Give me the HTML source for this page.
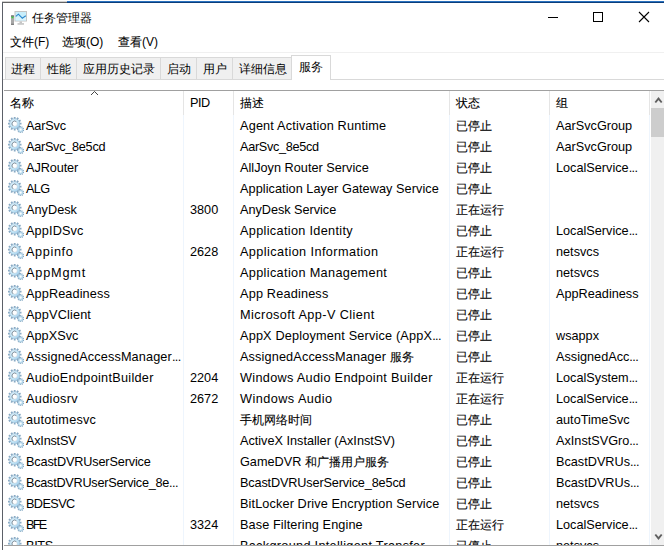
<!DOCTYPE html>
<html><head><meta charset="utf-8">
<style>
*{margin:0;padding:0;box-sizing:border-box}
html,body{width:664px;height:550px;overflow:hidden;background:#fff}
body{position:relative;font-family:"Liberation Sans",sans-serif;color:#000;font-size:12.7px}
.abs{position:absolute}
.c{font-size:12px;-webkit-text-stroke:0.1px #000}
.el{letter-spacing:-0.6px}
.bl{position:absolute;left:2px;top:2px;width:1px;height:548px;background:#5c6068}
.bt1{position:absolute;left:2px;top:1px;width:65px;height:1px;background:#d0d0d0}
.bt2{position:absolute;left:2px;top:2px;width:65px;height:1px;background:#646464}
.bt3{position:absolute;left:67px;top:1px;width:597px;height:1px;background:#2a72c0}
.bt4{position:absolute;left:67px;top:2px;width:597px;height:1px;background:#0b3d7a}
.title{position:absolute;left:32px;top:10px;line-height:17px;font-size:12px}
.menu{position:absolute;top:34px;line-height:17px;font-size:12px;white-space:nowrap}
.hl{position:absolute;height:1px}
.tab{position:absolute;top:57px;height:23px;background:#f0f0f0;border:1px solid #d9d9d9;border-bottom:none}
.tab span{position:absolute;top:4px;line-height:14px;font-size:12px;white-space:nowrap}
.tab.sel{top:55px;height:25px;background:#fff;z-index:2}
.hdr{position:absolute;top:92px;line-height:23px;white-space:nowrap}
.vd{position:absolute;width:1px}
.r{position:absolute;left:4px;width:646px;height:21px}
.r .g{position:absolute;left:4px;top:2px}
.t{position:absolute;top:1px;line-height:21px;white-space:nowrap}
.n{left:22px} .p{left:186px} .d{left:236px} .s{left:452px} .gr{left:552px}
</style></head><body>
<svg width="0" height="0" style="position:absolute">
<defs>
<linearGradient id="gg" x1="0" y1="0" x2="1" y2="1">
<stop offset="0" stop-color="#e2f3fc"/><stop offset="0.6" stop-color="#bfe4f7"/><stop offset="1" stop-color="#9cc8e8"/>
</linearGradient>
<symbol id="gear" viewBox="0 0 16 16">
<path d="M11.20,7.60 L13.50,7.60 L13.50,5.80 L11.20,5.80ZM10.15,9.73 L12.14,10.88 L13.04,9.32 L11.05,8.17ZM8.17,11.05 L9.32,13.04 L10.88,12.14 L9.73,10.15ZM5.80,11.20 L5.80,13.50 L7.60,13.50 L7.60,11.20ZM3.67,10.15 L2.52,12.14 L4.08,13.04 L5.23,11.05ZM2.35,8.17 L0.36,9.32 L1.26,10.88 L3.25,9.73ZM2.20,5.80 L-0.10,5.80 L-0.10,7.60 L2.20,7.60ZM3.25,3.67 L1.26,2.52 L0.36,4.08 L2.35,5.23ZM5.23,2.35 L4.08,0.36 L2.52,1.26 L3.67,3.25ZM7.60,2.20 L7.60,-0.10 L5.80,-0.10 L5.80,2.20ZM9.73,3.25 L10.88,1.26 L9.32,0.36 L8.17,2.35ZM11.05,5.23 L13.04,4.08 L12.14,2.52 L10.15,3.67Z" fill="#88a9c3"/>
<circle cx="6.7" cy="6.7" r="5.0" fill="url(#gg)" stroke="#94b5cd" stroke-width="0.5"/>
<circle cx="6.7" cy="6.7" r="2.6" fill="#fdfeff" stroke="#a9bccb" stroke-width="0.4"/>
<path d="M8.3,4.6 A2.6,2.6 0 0 0 5.0,8.8" fill="none" stroke="#6a7480" stroke-width="0.7"/>
<path d="M14.35,13.72 L15.88,14.19 L16.20,13.14 L14.67,12.67ZM13.22,14.58 L14.09,15.92 L15.01,15.33 L14.15,13.98ZM11.80,14.52 L11.60,16.10 L12.70,16.24 L12.90,14.65ZM10.76,13.56 L9.59,14.64 L10.33,15.45 L11.51,14.36ZM10.58,12.15 L8.98,12.23 L9.03,13.33 L10.63,13.25ZM11.34,10.95 L10.06,9.99 L9.40,10.86 L10.67,11.83ZM12.69,10.53 L12.34,8.97 L11.27,9.21 L11.62,10.77ZM14.00,11.07 L14.73,9.65 L13.76,9.15 L13.02,10.57ZM14.66,12.33 L16.13,11.71 L15.71,10.70 L14.23,11.32Z" fill="#86a9c4"/>
<circle cx="12.6" cy="12.6" r="2.5" fill="#bfe0f2" stroke="#8fb2cc" stroke-width="0.4"/>
<circle cx="12.6" cy="12.6" r="1.1" fill="#fff"/>
</symbol>
</defs></svg>

<div class="bt1"></div><div class="bt2"></div><div class="bt3"></div><div class="bt4"></div>
<div class="bl"></div>

<!-- title icon -->
<svg class="abs" style="left:0;top:0" width="30" height="30" viewBox="0 0 30 30">
<rect x="11" y="15.5" width="3" height="9" rx="0.8" fill="#a8a8a8"/>
<rect x="11" y="15.5" width="3" height="1" fill="#505058"/>
<rect x="11.5" y="16.6" width="2" height="1.6" fill="#3cd23c"/>
<rect x="11" y="23.8" width="3" height="1" fill="#6c6c6c"/>
<rect x="14.5" y="11" width="12.5" height="10.5" fill="#c4c4c4"/>
<rect x="15.5" y="12" width="10.5" height="8.5" fill="#c8eefb"/>
<rect x="15.5" y="17" width="10.5" height="3.5" fill="#d8f4fd"/>
<polyline points="15.8,16.4 18.4,14.2 22.3,18.2 25.8,15.8" fill="none" stroke="#2d88cc" stroke-width="1.1"/>
<rect x="19.5" y="21.5" width="2.5" height="1.8" fill="#c4c4c4"/>
<rect x="17.5" y="23.2" width="6.5" height="1.5" fill="#c0c0c0"/>
</svg>
<div class="title">任务管理器</div>

<!-- window buttons -->
<div class="abs" style="left:548px;top:17px;width:10px;height:1px;background:#000"></div>
<div class="abs" style="left:593px;top:12px;width:10px;height:10px;border:1px solid #000"></div>
<svg class="abs" style="left:638px;top:11px" width="12" height="12" viewBox="0 0 12 12">
<path d="M1,1 L11,11 M11,1 L1,11" stroke="#000" stroke-width="1.1"/>
</svg>

<!-- menu -->
<div class="menu" style="left:10px"><span class="c">文件</span>(F)</div>
<div class="menu" style="left:62px"><span class="c">选项</span>(O)</div>
<div class="menu" style="left:118px"><span class="c">查看</span>(V)</div>
<div class="hl" style="left:3px;top:52px;width:661px;background:#f0f0f0"></div>

<!-- tabs -->
<div class="tab" style="left:5px;width:36px"><span style="left:5px">进程</span></div>
<div class="tab" style="left:40px;width:37px"><span style="left:6px">性能</span></div>
<div class="tab" style="left:76px;width:85px"><span style="left:6px">应用历史记录</span></div>
<div class="tab" style="left:160px;width:37px"><span style="left:6px">启动</span></div>
<div class="tab" style="left:196px;width:37px"><span style="left:6px">用户</span></div>
<div class="tab" style="left:232px;width:61px"><span style="left:6px">详细信息</span></div>
<div class="tab sel" style="left:291px;width:40px"><span style="left:7px;top:4px">服务</span></div>
<div class="hl" style="left:3px;top:79px;width:661px;background:#d9d9d9;z-index:1"></div>

<!-- header -->
<div class="hl" style="left:4px;top:90px;width:660px;background:#a0a0a0"></div>
<div class="abs" style="left:91px;top:94px;width:1px;height:1px;background:#444"></div>
<div class="abs" style="left:92px;top:93px;width:1px;height:1px;background:#444"></div>
<div class="abs" style="left:93px;top:92px;width:1px;height:1px;background:#444"></div>
<div class="abs" style="left:94px;top:91px;width:1px;height:1px;background:#666"></div>
<div class="abs" style="left:95px;top:92px;width:1px;height:1px;background:#444"></div>
<div class="abs" style="left:96px;top:93px;width:1px;height:1px;background:#444"></div>
<div class="abs" style="left:97px;top:94px;width:1px;height:1px;background:#444"></div>
<div class="hdr" style="left:10px"><span class="c">名称</span></div>
<div class="hdr" style="left:190px;letter-spacing:-0.5px">PID</div>
<div class="hdr" style="left:240px"><span class="c">描述</span></div>
<div class="hdr" style="left:456px"><span class="c">状态</span></div>
<div class="hdr" style="left:556px"><span class="c">组</span></div>
<div class="vd" style="left:183px;top:91px;height:24px;background:#e5e5e5"></div>
<div class="vd" style="left:233px;top:91px;height:24px;background:#e5e5e5"></div>
<div class="vd" style="left:449px;top:91px;height:24px;background:#e5e5e5"></div>
<div class="vd" style="left:549px;top:91px;height:24px;background:#e5e5e5"></div>
<div class="vd" style="left:649px;top:91px;height:24px;background:#e5e5e5"></div>
<div class="vd" style="left:183px;top:115px;height:430px;background:#eef5fd"></div>
<div class="vd" style="left:233px;top:115px;height:430px;background:#eef5fd"></div>
<div class="vd" style="left:449px;top:115px;height:430px;background:#eef5fd"></div>
<div class="vd" style="left:549px;top:115px;height:430px;background:#eef5fd"></div>
<div class="vd" style="left:649px;top:115px;height:430px;background:#eef5fd"></div>

<!-- rows -->
<div class="abs" style="left:0;top:0;width:664px;height:545px;overflow:hidden">
<div class="r" style="top:115px"><svg class="g" width="16" height="16" viewBox="0 0 16 16"><use href="#gear"/></svg><span class="t n" style="letter-spacing:-0.160px">AarSvc</span><span class="t p"></span><span class="t d" style="letter-spacing:0.183px">Agent Activation Runtime</span><span class="t s"><span class="c">已停止</span></span><span class="t gr">AarSvcGroup</span></div>
<div class="r" style="top:136px"><svg class="g" width="16" height="16" viewBox="0 0 16 16"><use href="#gear"/></svg><span class="t n" style="letter-spacing:-0.273px">AarSvc_8e5cd</span><span class="t p"></span><span class="t d" style="letter-spacing:-0.309px">AarSvc_8e5cd</span><span class="t s"><span class="c">已停止</span></span><span class="t gr">AarSvcGroup</span></div>
<div class="r" style="top:157px"><svg class="g" width="16" height="16" viewBox="0 0 16 16"><use href="#gear"/></svg><span class="t n" style="letter-spacing:-0.086px">AJRouter</span><span class="t p"></span><span class="t d" style="letter-spacing:0.019px">AllJoyn Router Service</span><span class="t s"><span class="c">已停止</span></span><span class="t gr">LocalService<span class="el">...</span></span></div>
<div class="r" style="top:178px"><svg class="g" width="16" height="16" viewBox="0 0 16 16"><use href="#gear"/></svg><span class="t n" style="letter-spacing:-0.600px">ALG</span><span class="t p"></span><span class="t d" style="letter-spacing:0.062px">Application Layer Gateway Service</span><span class="t s"><span class="c">已停止</span></span><span class="t gr"></span></div>
<div class="r" style="top:199px"><svg class="g" width="16" height="16" viewBox="0 0 16 16"><use href="#gear"/></svg><span class="t n" style="letter-spacing:0.033px">AnyDesk</span><span class="t p">3800</span><span class="t d" style="letter-spacing:-0.029px">AnyDesk Service</span><span class="t s"><span class="c">正在运行</span></span><span class="t gr"></span></div>
<div class="r" style="top:220px"><svg class="g" width="16" height="16" viewBox="0 0 16 16"><use href="#gear"/></svg><span class="t n" style="letter-spacing:0.143px">AppIDSvc</span><span class="t p"></span><span class="t d" style="letter-spacing:0.326px">Application Identity</span><span class="t s"><span class="c">已停止</span></span><span class="t gr">LocalService<span class="el">...</span></span></div>
<div class="r" style="top:241px"><svg class="g" width="16" height="16" viewBox="0 0 16 16"><use href="#gear"/></svg><span class="t n" style="letter-spacing:0.633px">Appinfo</span><span class="t p">2628</span><span class="t d" style="letter-spacing:0.409px">Application Information</span><span class="t s"><span class="c">正在运行</span></span><span class="t gr">netsvcs</span></div>
<div class="r" style="top:262px"><svg class="g" width="16" height="16" viewBox="0 0 16 16"><use href="#gear"/></svg><span class="t n" style="letter-spacing:0.833px">AppMgmt</span><span class="t p"></span><span class="t d" style="letter-spacing:0.343px">Application Management</span><span class="t s"><span class="c">已停止</span></span><span class="t gr">netsvcs</span></div>
<div class="r" style="top:283px"><svg class="g" width="16" height="16" viewBox="0 0 16 16"><use href="#gear"/></svg><span class="t n" style="letter-spacing:0.109px">AppReadiness</span><span class="t p"></span><span class="t d" style="letter-spacing:0.183px">App Readiness</span><span class="t s"><span class="c">已停止</span></span><span class="t gr">AppReadiness</span></div>
<div class="r" style="top:304px"><svg class="g" width="16" height="16" viewBox="0 0 16 16"><use href="#gear"/></svg><span class="t n" style="letter-spacing:0.156px">AppVClient</span><span class="t p"></span><span class="t d" style="letter-spacing:0.419px">Microsoft App-V Client</span><span class="t s"><span class="c">已停止</span></span><span class="t gr"></span></div>
<div class="r" style="top:325px"><svg class="g" width="16" height="16" viewBox="0 0 16 16"><use href="#gear"/></svg><span class="t n" style="letter-spacing:0.033px">AppXSvc</span><span class="t p"></span><span class="t d" style="letter-spacing:0.181px">AppX Deployment Service (AppX<span class="el">...</span></span><span class="t s"><span class="c">已停止</span></span><span class="t gr">wsappx</span></div>
<div class="r" style="top:346px"><svg class="g" width="16" height="16" viewBox="0 0 16 16"><use href="#gear"/></svg><span class="t n" style="letter-spacing:0.130px">AssignedAccessManager<span class="el">...</span></span><span class="t p"></span><span class="t d" style="letter-spacing:0.139px">AssignedAccessManager <span class="c">服务</span></span><span class="t s"><span class="c">已停止</span></span><span class="t gr">AssignedAcc<span class="el">...</span></span></div>
<div class="r" style="top:367px"><svg class="g" width="16" height="16" viewBox="0 0 16 16"><use href="#gear"/></svg><span class="t n" style="letter-spacing:0.284px">AudioEndpointBuilder</span><span class="t p">2204</span><span class="t d" style="letter-spacing:0.310px">Windows Audio Endpoint Builder</span><span class="t s"><span class="c">正在运行</span></span><span class="t gr">LocalSystem<span class="el">...</span></span></div>
<div class="r" style="top:388px"><svg class="g" width="16" height="16" viewBox="0 0 16 16"><use href="#gear"/></svg><span class="t n" style="letter-spacing:0.314px">Audiosrv</span><span class="t p">2672</span><span class="t d" style="letter-spacing:0.450px">Windows Audio</span><span class="t s"><span class="c">正在运行</span></span><span class="t gr">LocalService<span class="el">...</span></span></div>
<div class="r" style="top:409px"><svg class="g" width="16" height="16" viewBox="0 0 16 16"><use href="#gear"/></svg><span class="t n" style="letter-spacing:0.220px">autotimesvc</span><span class="t p"></span><span class="t d"><span class="c">手机网络时间</span></span><span class="t s"><span class="c">已停止</span></span><span class="t gr">autoTimeSvc</span></div>
<div class="r" style="top:430px"><svg class="g" width="16" height="16" viewBox="0 0 16 16"><use href="#gear"/></svg><span class="t n" style="letter-spacing:-0.229px">AxInstSV</span><span class="t p"></span><span class="t d" style="letter-spacing:-0.007px">ActiveX Installer (AxInstSV)</span><span class="t s"><span class="c">已停止</span></span><span class="t gr">AxInstSVGro<span class="el">...</span></span></div>
<div class="r" style="top:451px"><svg class="g" width="16" height="16" viewBox="0 0 16 16"><use href="#gear"/></svg><span class="t n" style="letter-spacing:-0.156px">BcastDVRUserService</span><span class="t p"></span><span class="t d">GameDVR <span class="c">和广播用户服务</span></span><span class="t s"><span class="c">已停止</span></span><span class="t gr">BcastDVRUs<span class="el">...</span></span></div>
<div class="r" style="top:472px"><svg class="g" width="16" height="16" viewBox="0 0 16 16"><use href="#gear"/></svg><span class="t n" style="letter-spacing:-0.258px">BcastDVRUserService_8e<span class="el">...</span></span><span class="t p"></span><span class="t d" style="letter-spacing:-0.150px">BcastDVRUserService_8e5cd</span><span class="t s"><span class="c">已停止</span></span><span class="t gr">BcastDVRUs<span class="el">...</span></span></div>
<div class="r" style="top:493px"><svg class="g" width="16" height="16" viewBox="0 0 16 16"><use href="#gear"/></svg><span class="t n" style="letter-spacing:-0.600px">BDESVC</span><span class="t p"></span><span class="t d" style="letter-spacing:0.121px">BitLocker Drive Encryption Service</span><span class="t s"><span class="c">已停止</span></span><span class="t gr">netsvcs</span></div>
<div class="r" style="top:514px"><svg class="g" width="16" height="16" viewBox="0 0 16 16"><use href="#gear"/></svg><span class="t n" style="letter-spacing:-1.700px">BFE</span><span class="t p">3324</span><span class="t d" style="letter-spacing:0.100px">Base Filtering Engine</span><span class="t s"><span class="c">正在运行</span></span><span class="t gr">LocalService<span class="el">...</span></span></div>
<div class="r" style="top:535px"><svg class="g" width="16" height="16" viewBox="0 0 16 16"><use href="#gear"/></svg><span class="t n" style="letter-spacing:-0.333px">BITS</span><span class="t p"></span><span class="t d" style="letter-spacing:0.303px">Background Intelligent Transfer<span class="el">...</span></span><span class="t s"><span class="c">已停止</span></span><span class="t gr">netsvcs</span></div>
</div>

<!-- scrollbar -->
<div class="abs" style="left:651px;top:91px;width:13px;height:454px;background:#f0f0f0"></div>
<div class="abs" style="left:651px;top:108px;width:13px;height:29px;background:#cdcdcd"></div>
<svg class="abs" style="left:654px;top:96px" width="10" height="8" viewBox="0 0 10 8">
<polyline points="1.3,6.5 4.5,2.6 7.7,6.5" fill="none" stroke="#606060" stroke-width="1.9"/>
</svg>
<svg class="abs" style="left:654px;top:533px" width="10" height="8" viewBox="0 0 10 8">
<polyline points="1.3,1.5 4.5,5.4 7.7,1.5" fill="none" stroke="#606060" stroke-width="1.9"/>
</svg>
<div class="hl" style="left:4px;top:545px;width:660px;background:#a0a0a0"></div>
</body></html>
